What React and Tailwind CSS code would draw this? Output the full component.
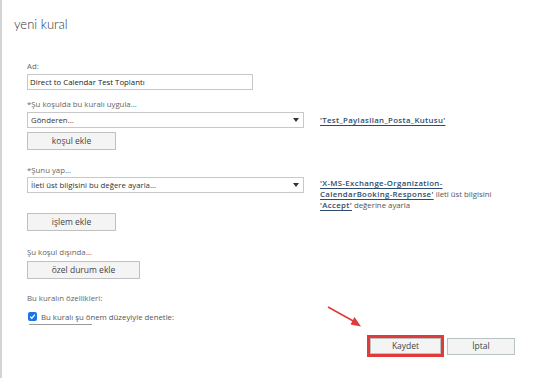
export default function App() {
  const font = { fontFamily: '"Open Sans", "Noto Sans", sans-serif' };
  const linkCls = "underline decoration-[0.5px] underline-offset-[1.5px] text-[#2e4b6e] font-semibold tracking-[0.35px]";
  return (
    <div className="relative w-[536px] h-[378px] overflow-hidden bg-white border-l-2 border-[#d4d4d4]" style={font}>
      <div className="pl-[12px] pt-[14px] text-[13px] font-light leading-[20px] text-[#333]" style={{ fontFamily: 'Lato, "Open Sans", sans-serif' }}>yeni kural</div>
      <div className="pl-[25px] pt-[27px] flex flex-col text-[7.8px] leading-[10px]">
        <div className="text-[#666]">Ad:</div>
        <div className="mt-[3px] w-[226px] h-[16px] border border-[#c8c8c8] flex items-center px-[2px] text-[#222]">Direct to Calendar Test Toplantı</div>

        <div className="mt-[9px] text-[#666]">*Şu koşulda bu kuralı uygula...</div>
        <div className="mt-[3px] flex items-start">
          <div className="flex flex-col">
            <div className="w-[277px] h-[16px] border border-[#c8c8c8] flex items-center justify-between pl-[3px] pr-[4px] text-[#333]">
              <span>Gönderen...</span>
              <span className="w-0 h-0 border-l-[3px] border-r-[3px] border-t-[4px] border-l-transparent border-r-transparent border-t-[#333]"></span>
            </div>
            <div className="mt-[4px] w-[89px] h-[18px] border border-[#c0c0c0] bg-[#f4f4f4] flex items-center justify-center text-[#444] text-[8.5px]">koşul ekle</div>
          </div>
          <div className={"ml-[16px] mt-[3px] " + linkCls}>'Test_Paylasilan_Posta_Kutusu'</div>
        </div>

        <div className="mt-[15px] text-[#666]">*Şunu yap...</div>
        <div className="mt-[2px] flex items-start">
          <div className="flex flex-col">
            <div className="w-[277px] h-[16px] border border-[#c8c8c8] flex items-center justify-between pl-[3px] pr-[4px] text-[#333]">
              <span>İleti üst bilgisini bu değere ayarla...</span>
              <span className="w-0 h-0 border-l-[3px] border-r-[3px] border-t-[4px] border-l-transparent border-r-transparent border-t-[#333]"></span>
            </div>
            <div className="mt-[20px] w-[89px] h-[18px] border border-[#c0c0c0] bg-[#f4f4f4] flex items-center justify-center text-[#444] text-[8.5px]">işlem ekle</div>
          </div>
          <div className="ml-[16px] mt-[1px] w-[190px] leading-[11px] text-[#555]">
            <span className={linkCls}>'X-MS-Exchange-Organization-</span>
            <br />
            <span className={linkCls}>CalendarBooking-Response'</span> ileti üst bilgisini
            <br />
            <span className={linkCls}>'Accept'</span> değerine ayarla
          </div>
        </div>

        <div className="mt-[16px] text-[#666]">Şu koşul dışında...</div>
        <div className="mt-[4px] w-[113px] h-[18px] border border-[#c0c0c0] bg-[#f4f4f4] flex items-center justify-center text-[#444] text-[8.5px]">özel durum ekle</div>

        <div className="mt-[14px] text-[#666]">Bu kuralın özellikleri:</div>
        <div className="mt-[7px] flex items-center pl-[1px]">
          <span className="w-[9px] h-[9px] rounded-[2px] bg-[#1a73e8] flex items-center justify-center">
            <svg width="7" height="7" viewBox="0 0 8 8"><path d="M1.3 4.2 L3.2 6 L6.8 1.8" stroke="white" strokeWidth="1.4" fill="none" /></svg>
          </span>
          <span className="ml-[4px] text-[#555] leading-[10px] mt-[2px]">Bu kuralı şu önem düzeyiyle denetle:</span>
        </div>
        <div className="mt-[2px] ml-[2px] w-[63px] border-t border-[#9a9a9a]"></div>
      </div>

      <div className="absolute right-[21px] bottom-[21px] flex items-center gap-[3px] text-[8.5px] text-[#444]">
        <div className="border-[3px] border-[#e03a3a] p-[0px]">
          <div className="w-[71px] h-[16px] border border-[#c0c0c0] bg-[#f4f4f4] flex items-center justify-center">Kaydet</div>
        </div>
        <div className="w-[68px] h-[17px] border border-[#b8c4c4] bg-[#f4f4f4] flex items-center justify-center">İptal</div>
      </div>

      <svg className="absolute left-[322px] top-[304px]" width="42" height="28" viewBox="0 0 42 28">
        <line x1="4" y1="3" x2="31" y2="18" stroke="#e03a3a" strokeWidth="1.6" />
        <polygon points="37,22.5 26.5,20.5 30.5,13" fill="#e03a3a" />
      </svg>
    </div>
  );
}
